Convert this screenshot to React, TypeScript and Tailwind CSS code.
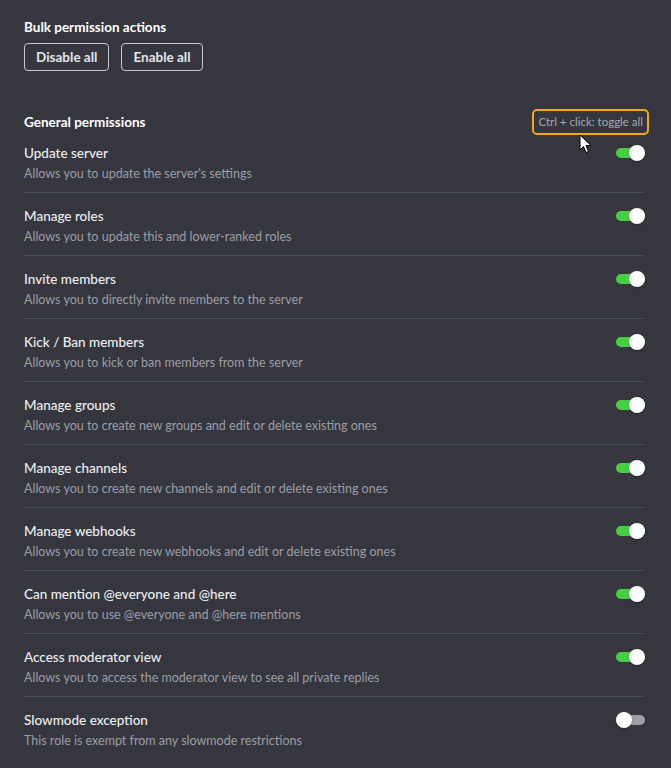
import { ReactNode } from 'react';

interface Permission {
    title: string;
    description: string;
    enabled: boolean;
}

const permissions: Permission[] = [
    { title: 'Update server', description: "Allows you to update the server's settings", enabled: true },
    { title: 'Manage roles', description: 'Allows you to update this and lower-ranked roles', enabled: true },
    { title: 'Invite members', description: 'Allows you to directly invite members to the server', enabled: true },
    { title: 'Kick / Ban members', description: 'Allows you to kick or ban members from the server', enabled: true },
    { title: 'Manage groups', description: 'Allows you to create new groups and edit or delete existing ones', enabled: true },
    { title: 'Manage channels', description: 'Allows you to create new channels and edit or delete existing ones', enabled: true },
    { title: 'Manage webhooks', description: 'Allows you to create new webhooks and edit or delete existing ones', enabled: true },
    { title: 'Can mention @everyone and @here', description: 'Allows you to use @everyone and @here mentions', enabled: true },
    { title: 'Access moderator view', description: 'Allows you to access the moderator view to see all private replies', enabled: true },
    { title: 'Slowmode exception', description: 'This role is exempt from any slowmode restrictions', enabled: false },
];

function Toggle({ on }: { on: boolean }) {
    return (
        <div className="relative w-[29px] h-[16px] flex items-center shrink-0">
            <div className={`w-full h-[10px] rounded-full ${on ? 'bg-[#45d042]' : 'bg-[#9d9ea8]'}`} />
            <div
                className={`absolute top-0 w-[16px] h-[16px] rounded-full bg-white shadow-[0_1px_2px_rgba(0,0,0,0.35)] ${on ? 'right-0' : 'left-0'}`}
            />
        </div>
    );
}

function SectionHeading({ children }: { children: ReactNode }) {
    return <h2 className="text-[13.5px] leading-[18px] font-bold text-white">{children}</h2>;
}

function OutlineButton({ children }: { children: ReactNode }) {
    return (
        <button className="h-[28px] px-[11px] rounded-[4px] border border-[#c9cad0] text-[13.5px] font-bold text-[#e4e5e8]">
            {children}
        </button>
    );
}

export default function App() {
    return (
        <div
            className="min-h-screen bg-[#36373e] pl-6 pr-[26px] pt-[18px] text-[#e6e7ea]"
            style={{ fontFamily: 'Lato, "Noto Sans", sans-serif' }}
        >
            {/* Bulk actions */}
            <SectionHeading>Bulk permission actions</SectionHeading>
            <div className="mt-[7px] flex gap-3">
                <OutlineButton>Disable all</OutlineButton>
                <OutlineButton>Enable all</OutlineButton>
            </div>

            {/* General permissions */}
            <div className="mt-[38px] relative flex items-center justify-between">
                <SectionHeading>General permissions</SectionHeading>
                <div className="-mr-1 h-[26px] px-[4px] flex items-center rounded-[5px] border-2 border-[#f0a81a] text-[11.5px] text-[#a6a8b0]">
                    Ctrl + click: toggle all
                </div>
                {/* mouse cursor */}
                <svg className="absolute right-[53px] top-[25px]" width="13" height="20" viewBox="0 0 13 20">
                    <path d="M1 1 L1 16 L4.5 12.5 L7 18.5 L9.5 17.5 L7 11.5 L12 11.5 Z" fill="#fff" stroke="#000" strokeWidth="1" strokeLinejoin="round" />
                </svg>
            </div>

            <div className="mt-[1px]">
                {permissions.map((p, i) => (
                    <div
                        key={p.title}
                        className={`flex items-start justify-between pb-[9px] ${i === 0 ? 'pt-[7px]' : 'pt-[13px] border-t border-[#4a4c54]'}`}
                    >
                        <div>
                            <div className="text-[13.5px] leading-[20px] font-medium text-[#eceef0]">{p.title}</div>
                            <div className="mt-[2px] text-[12.5px] leading-[18px] text-[#9b9da5]">{p.description}</div>
                        </div>
                        <div className="pt-[2px]">
                            <Toggle on={p.enabled} />
                        </div>
                    </div>
                ))}
            </div>
        </div>
    );
}
